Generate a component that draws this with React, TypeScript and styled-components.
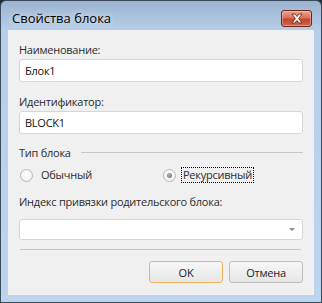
import React from "react";
import styled, { createGlobalStyle } from "styled-components";

const GlobalStyle = createGlobalStyle`
  html, body {
    margin: 0;
    padding: 0;
    background: #1f2b36;
  }
  body {
    font-family: "Open Sans", "Noto Sans", sans-serif;
    font-size: 11px;
    letter-spacing: -0.25px;
  }
`;

const Window = styled.div`
  width: 322px;
  height: 303px;
  box-sizing: border-box;
  border: 1px solid #3d4c5c;
  border-radius: 6px 6px 0 0;
  background: linear-gradient(#9cb4d1 0, #b6cee8 29px, #bcd4ed 100%);
  display: flex;
  flex-direction: column;
  overflow: hidden;
`;

const TitleBar = styled.div`
  height: 29px;
  display: flex;
  align-items: flex-start;
  padding: 9px 9px 0 11px;
  box-sizing: border-box;
`;

const Title = styled.div`
  flex: 1;
  line-height: 17px;
  font-size: 13px;
  letter-spacing: 0;
  color: #000;
  text-shadow: 0 0 6px rgba(255, 255, 255, 0.9);
`;

const CloseButton = styled.div`
  width: 31px;
  height: 17px;
  box-sizing: border-box;
  border: 1px solid #6e261c;
  border-radius: 3px;
  background: linear-gradient(#e9a58f 0, #d7705a 45%, #c4432c 55%, #d0684c 100%);
  box-shadow: inset 0 0 0 1px rgba(255, 210, 190, 0.45);
  display: flex;
  align-items: center;
  justify-content: center;
`;

const Client = styled.div`
  flex: 1;
  margin: 0 7px 7px;
  background: #f0f0f0;
  padding: 12px 11px 0;
  display: flex;
  flex-direction: column;
`;

const Label = styled.div<{ $top?: number }>`
  line-height: 15px;
  color: #2c2c2c;
  margin-top: ${(p) => p.$top ?? 0}px;
`;

const Input = styled.div<{ $h?: number; $top?: number }>`
  height: ${(p) => p.$h ?? 23}px;
  margin-top: ${(p) => p.$top ?? 2}px;
  box-sizing: border-box;
  background: #fff;
  border: 1px solid #d6d6d6;
  border-radius: 3px;
  display: flex;
  align-items: center;
  padding: 0 5px;
  color: #111;
  position: relative;
`;

const GroupHeader = styled.div`
  margin-top: 11px;
  display: flex;
  align-items: center;
  line-height: 15px;
  color: #2c2c2c;
`;

const GroupLine = styled.div`
  flex: 1;
  height: 1px;
  background: #c6c6c6;
  margin-left: 10px;
`;

const RadioRow = styled.div`
  margin-top: 7px;
  height: 16px;
  display: grid;
  grid-template-columns: 143px 1fr;
  padding-left: 1px;
`;

const RadioItem = styled.div`
  display: flex;
  align-items: center;
  gap: 6px;
  color: #2c2c2c;
`;

const RadioCircle = styled.div<{ $checked?: boolean }>`
  width: 13px;
  height: 13px;
  box-sizing: border-box;
  border-radius: 50%;
  border: 1px solid #b9b9b9;
  background: radial-gradient(circle at 50% 40%, #ffffff 0, #ececec 100%);
  display: flex;
  align-items: center;
  justify-content: center;
  &::after {
    content: "";
    display: ${(p) => (p.$checked ? "block" : "none")};
    width: 5px;
    height: 5px;
    border-radius: 50%;
    background: radial-gradient(circle at 40% 35%, #b0b0b0, #6e6e6e);
  }
`;

const RadioText = styled.span<{ $focused?: boolean }>`
  line-height: 14px;
  padding: 0 1px;
  margin-left: ${(p) => (p.$focused ? -1 : 0)}px;
  border: 1px dotted ${(p) => (p.$focused ? "#000" : "transparent")};
`;

const Arrow = styled.div`
  position: absolute;
  right: 7px;
  top: 8px;
  width: 0;
  height: 0;
  border-left: 3px solid transparent;
  border-right: 3px solid transparent;
  border-top: 3px solid #8a8a8a;
`;

const Separator = styled.div`
  margin: 9px 2px 0 1px;
  height: 1px;
  background: #c6c6c6;
`;

const ButtonRow = styled.div`
  margin-top: 11px;
  display: flex;
  justify-content: flex-end;
  gap: 6px;
`;

const Button = styled.div<{ $default?: boolean }>`
  width: 74px;
  height: 22px;
  box-sizing: border-box;
  border: 1px solid ${(p) => (p.$default ? "#f0b35a" : "#bdbdbd")};
  border-radius: 3px;
  background: linear-gradient(#f7f7f7, #e6e6e6);
  display: flex;
  align-items: center;
  justify-content: center;
  color: #1e1e1e;
`;

const CloseIcon = () => (
  <svg width="14" height="11" viewBox="0 0 14 11">
    <path
      d="M2 1 L5 1 L7 3.5 L9 1 L12 1 L8.6 5.5 L12 10 L9 10 L7 7.5 L5 10 L2 10 L5.4 5.5 Z"
      fill="#fff"
      stroke="#6b2a20"
      strokeWidth="0.9"
      strokeLinejoin="round"
    />
  </svg>
);

const App = () => {
  return (
    <>
      <GlobalStyle />
      <Window>
        <TitleBar>
          <Title>Свойства блока</Title>
          <CloseButton>
            <CloseIcon />
          </CloseButton>
        </TitleBar>
        <Client>
          <Label>Наименование:</Label>
          <Input>Блок1</Input>
          <Label $top={12}>Идентификатор:</Label>
          <Input>BLOCK1</Input>
          <GroupHeader>
            Тип блока
            <GroupLine />
          </GroupHeader>
          <RadioRow>
            <RadioItem>
              <RadioCircle />
              <RadioText>Обычный</RadioText>
            </RadioItem>
            <RadioItem>
              <RadioCircle $checked />
              <RadioText $focused>Рекурсивный</RadioText>
            </RadioItem>
          </RadioRow>
          <Label $top={11}>Индекс привязки родительского блока:</Label>
          <Input $h={21} $top={10}>
            <Arrow />
          </Input>
          <Separator />
          <ButtonRow>
            <Button $default>OK</Button>
            <Button>Отмена</Button>
          </ButtonRow>
        </Client>
      </Window>
    </>
  );
};

export default App;
